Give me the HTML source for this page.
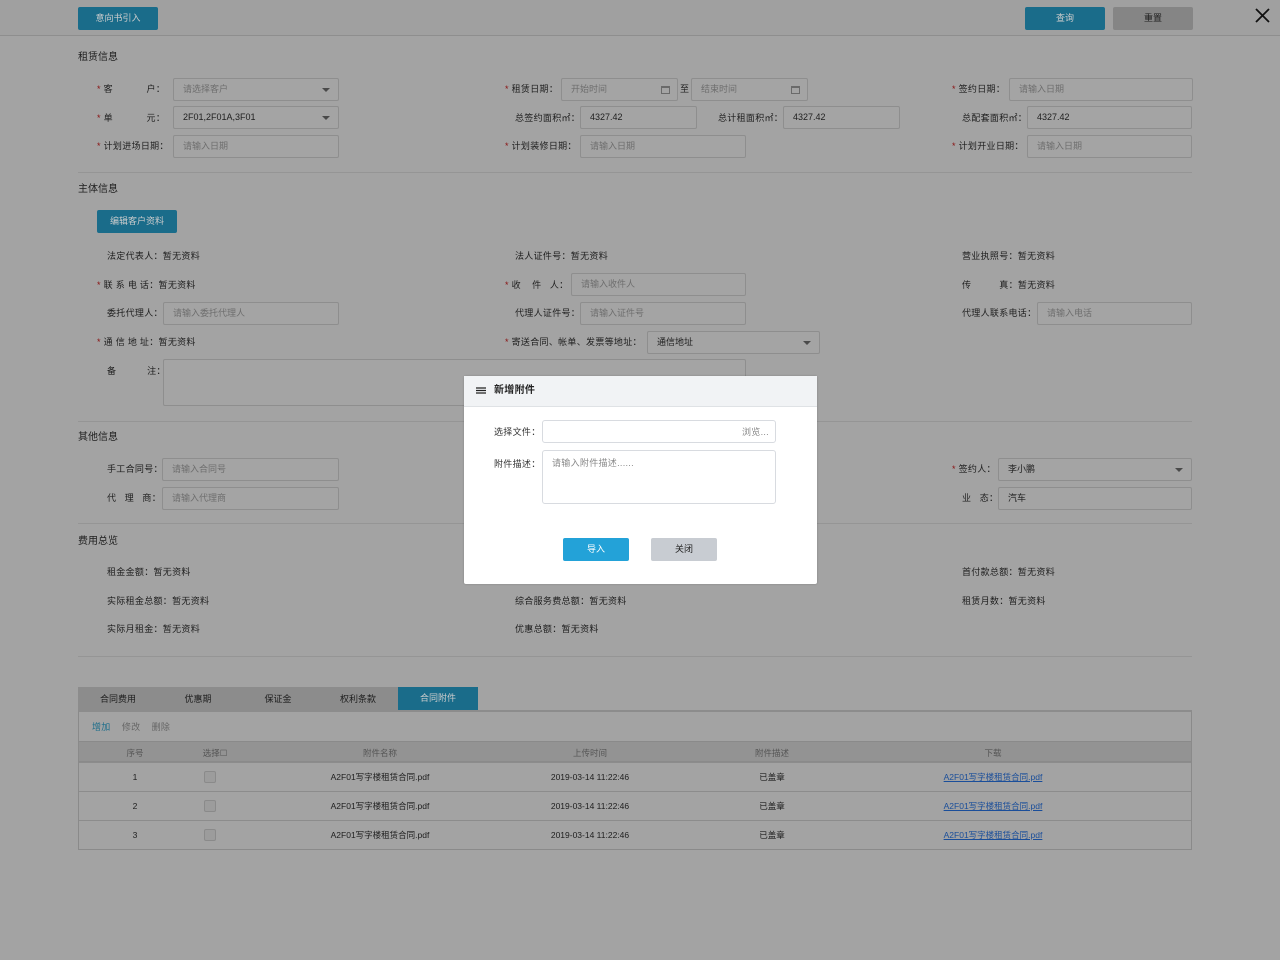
<!DOCTYPE html>
<html><head><meta charset="utf-8">
<style>
*{margin:0;padding:0;box-sizing:border-box}
body{width:1280px;height:960px;background:#a3a3a3;position:relative;overflow:hidden;font-family:"Liberation Sans","Noto Sans CJK SC",sans-serif;font-size:9px;color:#1e1e1e}
.a{position:absolute;white-space:nowrap;line-height:12px;letter-spacing:0.3px}
.i{position:absolute;height:23px;border:1px solid #8e8e8e;border-radius:2px;background:#a4a4a4;color:#6e6e6e;padding-left:9px;line-height:21px;font-size:9px}
.v{color:#1e1e1e}
.r{color:#8a1010}
.h{position:absolute;font-size:10px;line-height:12px}
.ln{position:absolute;left:78px;width:1114px;height:1px;background:#959595}
.dd:after{content:"";position:absolute;right:8px;top:9px;border:4px solid transparent;border-top:4px solid #4a4a4a}
.cal{position:absolute;right:7px;top:7px;width:9px;height:8px;border:1px solid #6a6a6a;border-top-width:2px}
.btn{position:absolute;text-align:center;color:#ccc;font-size:9px}
.tb{position:absolute;top:688px;height:22px;line-height:22px;text-align:center;font-size:9px;color:#1e1e1e}
.row{position:absolute;left:79px;width:1112px;height:29px;border-top:1px solid #8c8c8c}
.c{position:absolute;text-align:center;font-size:8.5px;line-height:12px}
.cb{position:absolute;width:12px;height:12px;border:1px solid #8a8a8a;border-radius:2px;background:#9c9c9c;left:125px}
</style></head><body>
<div style="position:absolute;left:0;top:0;width:1280px;height:36px;background:#a0a0a0;border-bottom:1px solid #8e8e8e"></div>
<div class="btn" style="left:78px;top:7px;width:80px;height:23px;line-height:23px;background:#1a6c8a;border-radius:2px">意向书引入</div>
<div class="btn" style="left:1025px;top:7px;width:80px;height:23px;line-height:23px;background:#1a6c8a;border-radius:2px">查询</div>
<div class="btn" style="left:1113px;top:7px;width:80px;height:23px;line-height:23px;background:#858585;color:#1e1e1e;border-radius:2px">重置</div>
<svg style="position:absolute;left:1255px;top:8px" width="15" height="15"><path d="M1 1L14 14M14 1L1 14" stroke="#111" stroke-width="1.8"/></svg>

<div class="h" style="left:78px;top:52px">租赁信息</div>
<div class="a" style="left:97px;top:83px"><span class="r">*</span> 客&nbsp;&nbsp;&nbsp;&nbsp;&nbsp;&nbsp;&nbsp;&nbsp;&nbsp;&nbsp;&nbsp;&nbsp;户：</div>
<div class="i dd" style="left:173px;top:78px;width:166px">请选择客户</div>
<div class="a" style="left:97px;top:112px"><span class="r">*</span> 单&nbsp;&nbsp;&nbsp;&nbsp;&nbsp;&nbsp;&nbsp;&nbsp;&nbsp;&nbsp;&nbsp;&nbsp;元：</div>
<div class="i dd v" style="left:173px;top:106px;width:166px">2F01,2F01A,3F01</div>
<div class="a" style="left:97px;top:140px"><span class="r">*</span> 计划进场日期：</div>
<div class="i" style="left:173px;top:135px;width:166px">请输入日期</div>

<div class="a" style="left:505px;top:83px"><span class="r">*</span> 租赁日期：</div>
<div class="i" style="left:561px;top:78px;width:117px">开始时间<span class="cal"></span></div>
<div class="a" style="left:680px;top:83px">至</div>
<div class="i" style="left:691px;top:78px;width:117px">结束时间<span class="cal"></span></div>
<div class="a" style="left:515px;top:112px">总签约面积㎡：</div>
<div class="i v" style="left:580px;top:106px;width:117px">4327.42</div>
<div class="a" style="left:718px;top:112px">总计租面积㎡：</div>
<div class="i v" style="left:783px;top:106px;width:117px">4327.42</div>
<div class="a" style="left:505px;top:140px"><span class="r">*</span> 计划装修日期：</div>
<div class="i" style="left:580px;top:135px;width:166px">请输入日期</div>

<div class="a" style="left:952px;top:83px"><span class="r">*</span> 签约日期：</div>
<div class="i" style="left:1009px;top:78px;width:184px">请输入日期</div>
<div class="a" style="left:962px;top:112px">总配套面积㎡：</div>
<div class="i v" style="left:1027px;top:106px;width:165px">4327.42</div>
<div class="a" style="left:952px;top:140px"><span class="r">*</span> 计划开业日期：</div>
<div class="i" style="left:1027px;top:135px;width:165px">请输入日期</div>
<div class="ln" style="top:172px"></div>

<div class="h" style="left:78px;top:184px">主体信息</div>
<div class="btn" style="left:97px;top:210px;width:80px;height:23px;line-height:23px;background:#1a6c8a;border-radius:2px">编辑客户资料</div>
<div class="a" style="left:107px;top:250px">法定代表人：暂无资料</div>
<div class="a" style="left:97px;top:279px"><span class="r">*</span> 联 系 电 话：暂无资料</div>
<div class="a" style="left:107px;top:307px">委托代理人：</div>
<div class="i" style="left:163px;top:302px;width:176px">请输入委托代理人</div>
<div class="a" style="left:97px;top:336px"><span class="r">*</span> 通 信 地 址：暂无资料</div>
<div class="a" style="left:107px;top:365px">备&nbsp;&nbsp;&nbsp;&nbsp;&nbsp;&nbsp;&nbsp;&nbsp;&nbsp;&nbsp;&nbsp;注：</div>
<div class="i" style="left:163px;top:359px;width:583px;height:47px"></div>

<div class="a" style="left:515px;top:250px">法人证件号：暂无资料</div>
<div class="a" style="left:505px;top:279px"><span class="r">*</span> 收&nbsp;&nbsp;&nbsp;&nbsp;件&nbsp;&nbsp;&nbsp;人：</div>
<div class="i" style="left:571px;top:273px;width:175px">请输入收件人</div>
<div class="a" style="left:515px;top:307px">代理人证件号：</div>
<div class="i" style="left:580px;top:302px;width:166px">请输入证件号</div>
<div class="a" style="left:505px;top:336px"><span class="r">*</span> 寄送合同、帐单、发票等地址：</div>
<div class="i dd v" style="left:647px;top:331px;width:173px">通信地址</div>

<div class="a" style="left:962px;top:250px">营业执照号：暂无资料</div>
<div class="a" style="left:962px;top:279px">传&nbsp;&nbsp;&nbsp;&nbsp;&nbsp;&nbsp;&nbsp;&nbsp;&nbsp;&nbsp;真：暂无资料</div>
<div class="a" style="left:962px;top:307px">代理人联系电话：</div>
<div class="i" style="left:1037px;top:302px;width:155px">请输入电话</div>
<div class="ln" style="top:421px"></div>

<div class="h" style="left:78px;top:432px">其他信息</div>
<div class="a" style="left:107px;top:463px">手工合同号：</div>
<div class="i" style="left:162px;top:458px;width:177px">请输入合同号</div>
<div class="a" style="left:107px;top:492px">代&nbsp;&nbsp;&nbsp;理&nbsp;&nbsp;&nbsp;商：</div>
<div class="i" style="left:162px;top:487px;width:177px">请输入代理商</div>
<div class="a" style="left:952px;top:463px"><span class="r">*</span> 签约人：</div>
<div class="i dd v" style="left:998px;top:458px;width:194px">李小鹏</div>
<div class="a" style="left:962px;top:492px">业&nbsp;&nbsp;&nbsp;态：</div>
<div class="i v" style="left:998px;top:487px;width:194px">汽车</div>
<div class="ln" style="top:523px"></div>

<div class="h" style="left:78px;top:536px">费用总览</div>
<div class="a" style="left:107px;top:566px">租金金额：暂无资料</div>
<div class="a" style="left:107px;top:595px">实际租金总额：暂无资料</div>
<div class="a" style="left:107px;top:623px">实际月租金：暂无资料</div>
<div class="a" style="left:515px;top:595px">综合服务费总额：暂无资料</div>
<div class="a" style="left:515px;top:623px">优惠总额：暂无资料</div>
<div class="a" style="left:962px;top:566px">首付款总额：暂无资料</div>
<div class="a" style="left:962px;top:595px">租赁月数：暂无资料</div>
<div class="ln" style="top:656px"></div>

<div style="position:absolute;left:78px;top:687px;width:320px;height:24px;background:#8c8c8c"></div>
<div class="tb" style="left:78px;width:80px">合同费用</div>
<div class="tb" style="left:158px;width:80px">优惠期</div>
<div class="tb" style="left:238px;width:80px">保证金</div>
<div class="tb" style="left:318px;width:80px">权利条款</div>
<div class="tb" style="left:398px;top:687px;height:24px;width:80px;background:#1a6c8a;color:#ccc">合同附件</div>
<div style="position:absolute;left:78px;top:710px;width:1114px;height:140px;border:1px solid #8a8a8a;border-top:2px solid #8c8c8c;background:#a3a3a3"></div>
<div class="a" style="left:92px;top:721px;color:#1a6c8a">增加&nbsp;&nbsp;&nbsp;&nbsp;<span style="color:#666">修改&nbsp;&nbsp;&nbsp;&nbsp;删除</span></div>
<div style="position:absolute;left:79px;top:741px;width:1112px;height:21px;background:#939393;border-top:1px solid #8a8a8a;border-bottom:1px solid #8a8a8a"></div>
<div class="c" style="left:115px;top:747px;width:40px;color:#555">序号</div>
<div class="c" style="left:195px;top:747px;width:40px;color:#555">选择☐</div>
<div class="c" style="left:330px;top:747px;width:100px;color:#555">附件名称</div>
<div class="c" style="left:540px;top:747px;width:100px;color:#555">上传时间</div>
<div class="c" style="left:722px;top:747px;width:100px;color:#555">附件描述</div>
<div class="c" style="left:943px;top:747px;width:100px;color:#555">下载</div>

<div class="row" style="top:762px"><div class="cb" style="top:8px"></div></div>
<div class="row" style="top:791px"><div class="cb" style="top:8px"></div></div>
<div class="row" style="top:820px;height:29px"><div class="cb" style="top:8px"></div></div>
<div class="c" style="left:115px;top:771px;width:40px">1</div>
<div class="c" style="left:115px;top:800px;width:40px">2</div>
<div class="c" style="left:115px;top:829px;width:40px">3</div>
<div class="c" style="left:300px;top:771px;width:160px">A2F01写字楼租赁合同.pdf</div>
<div class="c" style="left:300px;top:800px;width:160px">A2F01写字楼租赁合同.pdf</div>
<div class="c" style="left:300px;top:829px;width:160px">A2F01写字楼租赁合同.pdf</div>
<div class="c" style="left:530px;top:771px;width:120px">2019-03-14 11:22:46</div>
<div class="c" style="left:530px;top:800px;width:120px">2019-03-14 11:22:46</div>
<div class="c" style="left:530px;top:829px;width:120px">2019-03-14 11:22:46</div>
<div class="c" style="left:742px;top:771px;width:60px">已盖章</div>
<div class="c" style="left:742px;top:800px;width:60px">已盖章</div>
<div class="c" style="left:742px;top:829px;width:60px">已盖章</div>
<div class="c" style="left:918px;top:771px;width:150px;color:#1a4e9a;text-decoration:underline">A2F01写字楼租赁合同.pdf</div>
<div class="c" style="left:918px;top:800px;width:150px;color:#1a4e9a;text-decoration:underline">A2F01写字楼租赁合同.pdf</div>
<div class="c" style="left:918px;top:829px;width:150px;color:#1a4e9a;text-decoration:underline">A2F01写字楼租赁合同.pdf</div>

<!-- modal -->
<div style="position:absolute;left:464px;top:376px;width:353px;height:208px;background:#fff;border-radius:2px;box-shadow:0 0 2px rgba(0,0,0,.2)">
  <div style="height:31px;background:#f1f3f5;border-bottom:1px solid #dfe2e5;position:relative">
    <svg style="position:absolute;left:12px;top:11px" width="10" height="8"><path d="M0 1H10M0 3.5H10M0 6H10" stroke="#222" stroke-width="1.3"/></svg>
    <div class="a" style="left:30px;top:9px;font-size:10px;font-weight:bold;color:#222">新增附件</div>
  </div>
  <div class="a" style="left:30px;top:50px;color:#333">选择文件：</div>
  <div style="position:absolute;left:78px;top:44px;width:234px;height:23px;border:1px solid #d8dbe0;border-radius:3px"><span class="a" style="right:6px;top:5px;color:#888">浏览...</span></div>
  <div class="a" style="left:30px;top:82px;color:#333">附件描述：</div>
  <div style="position:absolute;left:78px;top:74px;width:234px;height:54px;border:1px solid #d8dbe0;border-radius:3px"><span class="a" style="left:9px;top:6px;color:#888">请输入附件描述......</span></div>
  <div class="btn" style="left:99px;top:162px;width:66px;height:23px;line-height:23px;background:#23a2d8;color:#fff;border-radius:2px">导入</div>
  <div class="btn" style="left:187px;top:162px;width:66px;height:23px;line-height:23px;background:#c8ccd2;color:#222;border-radius:2px">关闭</div>
</div>
</body></html>
